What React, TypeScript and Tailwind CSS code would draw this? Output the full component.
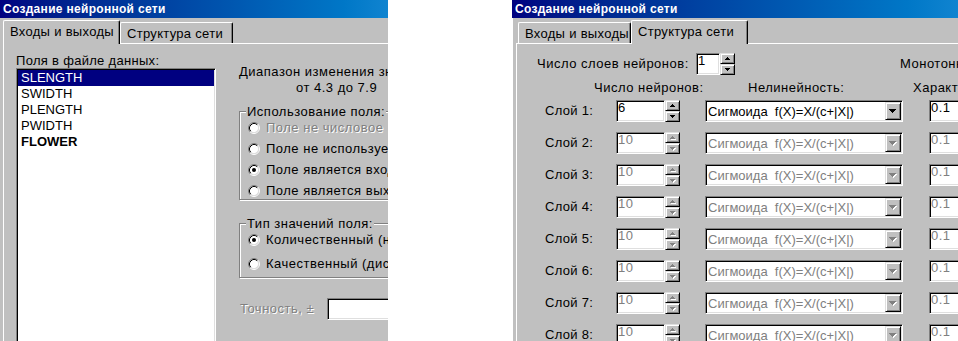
import type { ReactNode } from "react";

const sunken =
  "shrink-0 border border-t-[#808080] border-l-[#808080] border-r-white border-b-white shadow-[inset_1px_1px_0_#000,inset_-1px_-1px_0_#dfdfdf]";
const raised =
  "shrink-0 border border-t-[#dfdfdf] border-l-[#dfdfdf] border-r-black border-b-black shadow-[inset_1px_1px_0_#fff,inset_-1px_-1px_0_#808080] bg-[#c0c0c0]";
const grayText = "text-[#808080] [text-shadow:1px_1px_0_#fff]";

const fields = ["SLENGTH", "SWIDTH", "PLENGTH", "PWIDTH", "FLOWER"];
const layers = [1, 2, 3, 4, 5, 6, 7, 8];

function Arrow({ dir, size = "sm", disabled }: { dir: "up" | "down"; size?: "sm" | "md"; disabled?: boolean }) {
  const rows = size === "sm" ? [5, 3, 1] : [7, 5, 3, 1];
  const w = rows[0];
  const order = dir === "down" ? rows : [...rows].reverse();
  const draw = (dx: number, dy: number, fill: string) =>
    order.map((len, i) => (
      <rect key={fill + i} x={(w - len) / 2 + dx} y={i + dy} width={len} height={1} fill={fill} />
    ));
  return (
    <svg width={w + 1} height={order.length + 1} shapeRendering="crispEdges">
      {disabled && draw(1, 1, "#fff")}
      {draw(0, 0, disabled ? "#808080" : "#000")}
    </svg>
  );
}

function Spin({ disabled }: { disabled?: boolean }) {
  return (
    <div className="flex h-[22px] w-[15px] shrink-0 flex-col">
      <div className={`${raised} flex h-[11px] items-center justify-center`}>
        <Arrow dir="up" disabled={disabled} />
      </div>
      <div className={`${raised} flex h-[11px] items-center justify-center`}>
        <Arrow dir="down" disabled={disabled} />
      </div>
    </div>
  );
}

function Radio({ checked, disabled, children }: { checked?: boolean; disabled?: boolean; children: ReactNode }) {
  return (
    <div className="flex h-[12px] items-center gap-[6px] whitespace-nowrap">
      <svg width="12" height="12" viewBox="0 0 12 12" className="shrink-0">
        <circle cx="6" cy="6" r="4.5" fill="#fff" />
        <path d="M2.11 9.89A5.5 5.5 0 0 1 9.89 2.11" stroke="#808080" fill="none" />
        <path d="M9.89 2.11A5.5 5.5 0 0 1 2.11 9.89" stroke="#fff" fill="none" />
        <path d="M2.82 9.18A4.5 4.5 0 0 1 9.18 2.82" stroke="#000" fill="none" />
        <path d="M9.18 2.82A4.5 4.5 0 0 1 2.82 9.18" stroke="#dfdfdf" fill="none" />
        {checked && <circle cx="6" cy="6" r="2" fill="#000" />}
      </svg>
      <span className={disabled ? grayText : ""}>{children}</span>
    </div>
  );
}

function Group({ label, className, children }: { label: string; className: string; children: ReactNode }) {
  return (
    <div
      className={`relative w-[220px] border border-[#808080] shadow-[1px_1px_0_#fff,inset_1px_1px_0_#fff] ${className}`}
    >
      <span className="absolute -top-[8px] left-[6px] bg-[#c0c0c0] px-[1px] leading-[15px] whitespace-nowrap">
        {label}
      </span>
      {children}
    </div>
  );
}

function Tab({ active, width, children }: { active?: boolean; width: string; children: ReactNode }) {
  return (
    <div
      className={`${
        active ? "relative z-10 -mb-px h-[24px]" : "h-[21px]"
      } ${width} shrink-0 rounded-t-[2px] border-t border-l border-r border-white border-r-black bg-[#c0c0c0] pt-[3px] pl-[6px] leading-[15px] tracking-[0.3px] whitespace-nowrap shadow-[inset_-1px_0_0_#808080]`}
    >
      {children}
    </div>
  );
}

function TitleBar() {
  return (
    <div className="flex h-[18px] shrink-0 items-center bg-linear-to-r from-[#000080] to-[#1084d0] pl-[3px] text-[12px] font-bold tracking-[0.3px] whitespace-nowrap text-white">
      Создание нейронной сети
    </div>
  );
}

function InputsPage() {
  return (
    <div className="flex pl-[12px]">
      <div className="w-[200px] shrink-0 pt-[10px]">
        <div className="leading-[14px] tracking-[0.3px] whitespace-nowrap">Поля в файле данных:</div>
        <div className={`${sunken} h-[290px] w-[200px] bg-white px-[1px] pt-[1px] tracking-normal`}>
          {fields.map((f, i) => (
            <div
              key={f}
              className={`h-[16px] pl-[3px] leading-[16px] ${i === 0 ? "bg-[#000080] text-white" : ""} ${
                f === "FLOWER" ? "font-bold" : ""
              }`}
            >
              {f}
            </div>
          ))}
        </div>
      </div>
      <div className="ml-[23px] w-[240px] shrink-0 pt-[20px] whitespace-nowrap">
        <div className="leading-[16px]">Диапазон изменения значений:</div>
        <div className="pl-[57px] leading-[15px]">от 4.3 до 7.9</div>
        <Group label="Использование поля:" className="mt-[16px] h-[89px]">
          <div className="flex flex-col gap-[9px] pt-[10px] pl-[8px]">
            <Radio disabled>Поле не числовое</Radio>
            <Radio>Поле не используется</Radio>
            <Radio checked>Поле является входным</Radio>
            <Radio>Поле является выходным</Radio>
          </div>
        </Group>
        <Group label="Тип значений поля:" className="mt-[23px] h-[55px]">
          <div className="flex flex-col gap-[12px] pt-[10px] pl-[8px]">
            <Radio checked>Количественный (непрерывный)</Radio>
            <Radio>Качественный (дискретный)</Radio>
          </div>
        </Group>
        <div className="mt-[20px] flex h-[22px] items-center">
          <span className={`w-[88px] shrink-0 pl-[1px] ${grayText}`}>Точность, ±</span>
          <div className={`${sunken} h-[22px] w-[100px] bg-white`} />
        </div>
      </div>
    </div>
  );
}

function LayerRow({ n }: { n: number }) {
  const off = n > 1;
  const val = off ? "text-[#808080]" : "";
  return (
    <div className="flex h-[22px] items-center pl-[28px]">
      <span className="w-[71px] shrink-0 tracking-[0.3px] whitespace-nowrap">Слой {n}:</span>
      <div className={`${sunken} h-[22px] w-[49px] bg-white pl-[1px] leading-[13px] ${val}`}>{off ? "10" : "6"}</div>
      <Spin disabled={off} />
      <div className={`${sunken} ml-[25px] flex h-[22px] w-[198px] items-center justify-between bg-white pr-[1px]`}>
        <span className={`pl-[2px] leading-[15px] tracking-normal whitespace-pre ${val}`}>Сигмоида  f(X)=X/(c+|X|)</span>
        <div className={`${raised} flex h-[18px] w-[16px] items-center justify-center`}>
          <Arrow dir="down" size="md" disabled={off} />
        </div>
      </div>
      <div className={`${sunken} ml-[26px] h-[22px] w-[40px] bg-white pl-[1px] leading-[13px] ${val}`}>0.1</div>
    </div>
  );
}

function StructurePage() {
  return (
    <div className="whitespace-nowrap">
      <div className="mt-[9px] flex h-[22px] items-center pl-[20px]">
        <span className="w-[159px] shrink-0">Число слоев нейронов:</span>
        <div className={`${sunken} h-[22px] w-[24px] bg-white pl-[1px] leading-[13px]`}>1</div>
        <Spin />
        <span className="ml-[165px] shrink-0">Монотонность:</span>
      </div>
      <div className="mt-[5px] flex h-[15px] pl-[77px] leading-[15px]">
        <span className="w-[154px] shrink-0">Число нейронов:</span>
        <span className="w-[165px] shrink-0">Нелинейность:</span>
        <span className="shrink-0">Характеристика:</span>
      </div>
      <div className="mt-[5px] flex flex-col gap-[10px]">
        {layers.map((n) => (
          <LayerRow key={n} n={n} />
        ))}
      </div>
    </div>
  );
}

export default function App() {
  return (
    <div className="flex h-[341px] w-[958px] overflow-hidden bg-white font-['Liberation_Sans',Arial,sans-serif] text-[13px] tracking-[0.5px] text-black">
      <div className="flex h-full w-[388px] shrink-0 flex-col overflow-hidden bg-[#c0c0c0]">
        <TitleBar />
        <div className="flex flex-1 flex-col pl-[3px]">
          <div className="flex h-[25px] shrink-0 items-end">
            <Tab active width="w-[117px]">
              Входы и выходы
            </Tab>
            <Tab width="w-[113px]">Структура сети</Tab>
          </div>
          <div className="flex-1 border-t border-l border-white">
            <InputsPage />
          </div>
        </div>
      </div>

      <div className="ml-[124px] flex h-full w-[446px] shrink-0 flex-col overflow-hidden bg-[#c0c0c0]">
        <TitleBar />
        <div className="flex flex-1 flex-col border-l border-white pl-[3px]">
          <div className="flex h-[25px] shrink-0 items-end pl-[2px]">
            <Tab width="w-[113px]">Входы и выходы</Tab>
            <Tab active width="w-[117px]">
              Структура сети
            </Tab>
          </div>
          <div className="flex-1 overflow-hidden border-t border-l border-white">
            <StructurePage />
          </div>
        </div>
      </div>
    </div>
  );
}
